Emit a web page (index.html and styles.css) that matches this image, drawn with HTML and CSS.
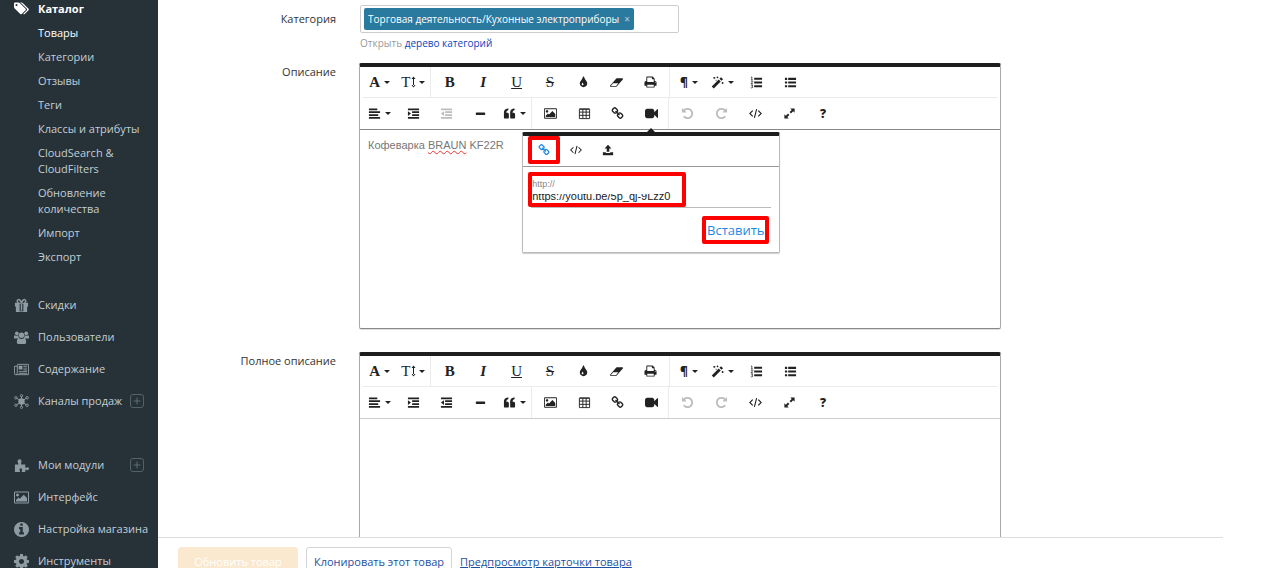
FILE: index.html
```html
<!DOCTYPE html>
<html lang="ru">
<head>
<meta charset="utf-8">
<title>Товары</title>
<link rel="stylesheet" href="styles.css">
</head>
<body>
<svg class="sprite" aria-hidden="true">
  <symbol id="tags" viewBox="0 0 1920 1792"><path d="M448 448q0-53-37.500-90.500t-90.500-37.500-90.500 37.500-37.500 90.500 37.500 90.500 90.500 37.500 90.500-37.500 37.500-90.500zm1067 576q0 53-37 90l-491 492q-39 37-91 37-53 0-90-37l-715-716q-38-37-64.500-101t-26.500-117v-416q0-52 38-90t90-38h416q53 0 117 26.500t102 64.500l715 714q37 39 37 91zm384 0q0 53-37 90l-491 492q-39 37-91 37-36 0-59-14t-53-45l470-470q37-37 37-90 0-52-37-91l-715-714q-38-38-102-64.500t-117-26.500h224q53 0 117 26.500t102 64.500l715 714q37 39 37 91z"/></symbol>
  <symbol id="gift" viewBox="0 0 16 16"><path fill-rule="evenodd" d="M1 5h14v4h-1v6H2V9H1zM6 6v8h4V6z"/><path d="M7.200 6.500h1.600v7H7.200z"/><path fill="none" stroke="currentColor" stroke-width="1.500" d="M8 5C7 2.500 5.500 1.500 4.500 1.700 2.800 2 3 4.600 5 4.900M8 5c1-2.500 2.500-3.500 3.500-3.300C13.200 2 13 4.600 11 4.900"/></symbol>
  <symbol id="users" viewBox="0 0 16 16"><circle cx="3" cy="3.500" r="2"/><circle cx="13" cy="3.500" r="2"/><circle cx="8" cy="5.500" r="2.900"/><path d="M0 9V7q0-1.500 1-1.500 1.800 1 3.600.2Q4.600 7.500 5.500 9H0zM16 9V7q0-1.500-1-1.500-1.800 1-3.600.2 0 1.800-.9 3.300H16zM3 13q0-4 2.500-4.200Q8 10.500 10.500 8.800 13 9 13 13q0 2-2 2H5q-2 0-2-2z"/></symbol>
  <symbol id="news" viewBox="0 0 16 16"><path fill="none" stroke="currentColor" d="M3.500 2.500h12v11h-14q-1 0-1-1v-8h3M3.500 3v9q0 1.500-1.500 1.500"/><path d="M5 4h4v4H5zM10 4h4v1h-4zM10 6h4v1h-4zM10 8h4v1h-4zM5 9.500h9v1H5zM5 11.500h9v1H5z"/></symbol>
  <symbol id="hub" viewBox="0 0 16 16"><circle cx="8" cy="8" r="3.400"/><g fill="none" stroke="currentColor"><path d="M8 8V2.500M8 8v5.500M8 8 3 4.500M8 8l5-3.500M8 8l-5 3.500M8 8l5 3.500"/><circle cx="8" cy="1.800" r="1.200"/><circle cx="8" cy="14.200" r="1.200"/><circle cx="2" cy="4" r="1.300"/><circle cx="14" cy="4" r="1.300"/><circle cx="2" cy="12" r="1.300"/><circle cx="14" cy="12" r="1.300"/></g></symbol>
  <symbol id="puzzle" viewBox="0 0 16 16"><path d="M1 7h3.500Q5 7 4.500 5.800 3.500 4 4 2.500 5 1 6.500 1.300 8.500 2 8 4 7.300 6 7.500 6.800L12 7v3q.5.700 1.500 0 2-.8 2.500 1 0 2-1.500 2-1-.2-2-.8-.5.300-.5 2.800H8.500q-.6-.5-.1-1.500.9-2-.9-2.500Q5.500 11 6 13q.8 1.200.3 2H1z"/></symbol>
  <symbol id="image" viewBox="-64 0 1920 1792"><path d="M576 576q0 80-56 136t-136 56-136-56-56-136 56-136 136-56 136 56 56 136zm1024 384v448h-1408v-192l320-320 160 160 512-512zm96-704h-1600q-13 0-22.500 9.500t-9.500 22.500v1216q0 13 9.500 22.500t22.500 9.500h1600q13 0 22.500-9.500t9.500-22.500v-1216q0-13-9.500-22.500t-22.500-9.500zm160 32v1216q0 66-47 113t-113 47h-1600q-66 0-113-47t-47-113v-1216q0-66 47-113t113-47h1600q66 0 113 47t47 113z"/></symbol>
  <symbol id="info" viewBox="128 128 1536 1536"><path d="M1152 1376v-160q0-14-9-23t-23-9h-96v-512q0-14-9-23t-23-9h-320q-14 0-23 9t-9 23v160q0 14 9 23t23 9h96v320h-96q-14 0-23 9t-9 23v160q0 14 9 23t23 9h448q14 0 23-9t9-23zm-128-896v-160q0-14-9-23t-23-9h-192q-14 0-23 9t-9 23v160q0 14 9 23t23 9h192q14 0 23-9t9-23zm640 416q0 209-103 385.500t-279.500 279.500-385.500 103-385.500-103-279.500-279.500-103-385.500 103-385.500 279.500-279.500 385.500-103 385.500 103 279.500 279.500 103 385.500z"/></symbol>
  <symbol id="cog" viewBox="128 128 1536 1536"><path d="M1152 896q0-106-75-181t-181-75-181 75-75 181 75 181 181 75 181-75 75-181zm512-109v222q0 12-8 23t-20 13l-185 28q-19 54-39 91 35 50 107 138 10 12 10 25t-9 23q-27 37-99 108t-94 71q-12 0-26-9l-138-108q-44 23-91 38-16 136-29 186-7 28-36 28h-222q-14 0-24.500-8.500t-11.500-21.500l-28-184q-49-16-90-37l-141 107q-10 9-25 9-14 0-25-11-126-114-165-168-7-10-7-23 0-12 8-23 15-21 51-66.500t54-70.500q-27-50-41-99l-183-27q-13-2-21-12.500t-8-23.500v-222q0-12 8-23t19-13l186-28q14-46 39-92-40-57-107-138-10-12-10-24 0-10 9-23 26-36 98.500-107.500t94.500-71.500q13 0 26 10l138 107q44-23 91-38 16-136 29-186 7-28 36-28h222q14 0 24.500 8.500t11.500 21.500l28 184q49 16 90 37l142-107q9-9 24-9 13 0 25 10 129 119 165 170 7 8 7 22 0 12-8 23-15 21-51 66.500t-54 70.500q26 50 41 98l183 28q13 2 21 12.500t8 23.500z"/></symbol>
  <symbol id="height" viewBox="0 0 5 14"><path d="M2 3h1v8H2zM2.500 1.500l2 2.500h-4zM2.500 12.500l2-2.500h-4z"/></symbol>
  <symbol id="tint" viewBox="0 0 1792 1792"><path d="M896 1152q0-36-20-69-1-1-15.500-22.500t-25.500-38-25-44-21-50.500q-4-16-21-16t-21 16q-7 23-21 50.500t-25 44-25.500 38-15.500 22.500q-20 33-20 69 0 53 37.500 90.500t90.500 37.500 90.500-37.500 37.500-90.500zm512-128q0 212-150 362t-362 150-362-150-150-362q0-145 81-275 6-9 62.500-90.500t101-151 99.500-178 83-201.500q9-30 34-47t51-17 51.500 17 33.500 47q28 93 83 201.500t99.500 178 101 151 62.500 90.500q81 127 81 275z"/></symbol>
  <symbol id="eraser" viewBox="-64 0 1920 1792"><path d="M832 1408l336-384h-768l-336 384h768zm1013-1077q15 34 9.500 71.500t-30.500 65.500l-896 1024q-38 44-96 44h-768q-38 0-69.500-20.500t-47.500-54.500q-15-34-9.500-71.500t30.500-65.500l896-1024q38-44 96-44h768q38 0 69.500 20.500t47.500 54.500z"/></symbol>
  <symbol id="print" viewBox="0 64 1792 1792"><path d="M448 1536h896v-256h-896v256zm0-640h896v-384h-160q-40 0-68-28t-28-68v-160h-640v640zm1152 64q0-26-19-45t-45-19-45 19-19 45 19 45 45 19 45-19 19-45zm128 0v416q0 13-9.500 22.500t-22.500 9.500h-224v160q0 40-28 68t-68 28h-960q-40 0-68-28t-28-68v-160h-224q-13 0-22.500-9.500t-9.500-22.500v-416q0-79 56.500-135.500t135.500-56.500h64v-544q0-40 28-68t68-28h672q40 0 88 20t76 48l152 152q28 28 48 76t20 88v256h64q79 0 135.500 56.500t56.500 135.500z"/></symbol>
  <symbol id="magic" viewBox="0 0 14 14"><path d="M.8 11.300 8.300 3.800l2.200 2.200L3 13.500zM9.100 3l1.700-1.700L13 3.500l-1.700 1.700z"/><path d="M3 1h1.200v2H3zM2.300 1.500h2.500v1H2.300zM6.500.5h1v2h-1zM6 1h2v1H6zM12 6.500h1v2h-1zM11.500 7h2v1h-2zM5 4h1v1H5z"/></symbol>
  <symbol id="ol" viewBox="0 0 14 14"><path d="M4.500 2H13v2H4.500zM4.500 6H13v2H4.500zM4.500 10H13v2H4.500z"/><path fill="none" stroke="currentColor" stroke-width=".8" d="M1 1.500 2 1v3M1 4.200h2M1 5.800q2-1 2 .3L1 8.300h2.200M1 9.800h2l-1 1.200q1.500.3.800 1.400-1 .8-2 0"/></symbol>
  <symbol id="ul" viewBox="0 0 14 14"><path d="M1 2h2.400v2.200H1zM4.500 2H13v2.200H4.500zM1 6h2.400v2.200H1zM4.500 6H13v2.200H4.500zM1 10h2.400v2.200H1zM4.500 10H13v2.200H4.500z"/></symbol>
  <symbol id="align" viewBox="0 0 14 14"><path d="M1 1.500h9v1.900H1zM1 4.600h12v1.900H1zM1 7.700h10v1.900H1zM1 10.800h12v1.900H1z"/></symbol>
  <symbol id="indent" viewBox="0 0 14 14"><path d="M1 1.500h12v1.900H1zM5.500 4.600H13v1.900H5.500zM5.500 7.700H13v1.900H5.500zM1 10.800h12v1.900H1zM1 4.600l3.300 2.500L1 9.600z"/></symbol>
  <symbol id="outdent" viewBox="0 0 14 14"><path d="M1 1.500h12v1.900H1zM5.500 4.600H13v1.900H5.500zM5.500 7.700H13v1.900H5.500zM1 10.800h12v1.900H1zM4.300 4.600 1 7.100l3.300 2.500z"/></symbol>
  <symbol id="minus" viewBox="0 0 14 14"><rect x="2" y="6" width="10" height="2.500" rx=".6"/></symbol>
  <symbol id="quote" viewBox="0 0 14 14"><path d="M6.300 8v3.200q0 1.300-1.300 1.300H2.300Q1 12.500 1 11.200V6q0-4 4-4.500h.8v1.800Q3.500 3.700 3.500 6.300H5Q6.300 6.500 6.300 8zM13 8v3.200q0 1.300-1.300 1.300H9q-1.300 0-1.300-1.300V6q0-4 4-4.500h.8v1.800q-2.300.4-2.300 3h1.500Q13 6.500 13 8z"/></symbol>
  <symbol id="table" viewBox="0 0 14 14"><path fill="none" stroke="currentColor" d="M1.500 2.500h11v10h-11zM1.500 5.500h11M1.500 9h11M5.200 2.500v10M8.800 2.500v10M1.500 2h11"/></symbol>
  <symbol id="link" viewBox="0 0 1792 1792"><path d="M1520 1216q0-40-28-68l-208-208q-28-28-68-28-42 0-72 32 3 3 19 18.500t21.500 21.500 15 19 13 25.500 3.500 27.500q0 40-28 68t-68 28q-15 0-27.500-3.500t-25.500-13-19-15-21.500-21.500-18.500-19q-33 31-33 73 0 40 28 68l206 207q27 27 68 27 40 0 68-26l147-146q28-28 28-67zm-703-705q0-40-28-68l-206-207q-28-28-68-28-39 0-68 27l-147 146q-28 28-28 67 0 40 28 68l208 208q27 27 68 27 42 0 72-31-3-3-19-18.500t-21.500-21.500-15-19-13-25.500-3.500-27.500q0-40 28-68t68-28q15 0 27.500 3.500t25.500 13 19 15 21.500 21.500 18.500 19q33-31 33-73zm895 705q0 120-85 203l-147 146q-83 83-203 83-121 0-204-85l-206-207q-83-83-83-203 0-123 88-209l-88-88q-86 88-208 88-120 0-204-84l-208-208q-84-84-84-204t85-203l147-146q83-83 203-83 121 0 204 85l206 207q83 83 83 203 0 123-88 209l88 88q86-88 208-88 120 0 204 84l208 208q84 84 84 204z"/></symbol>
  <symbol id="video" viewBox="0 0 1792 1792"><path d="M1792 352v1088q0 42-39 59-13 5-25 5-27 0-45-19l-403-403v166q0 119-84.500 203.500t-203.500 84.500h-704q-119 0-203.500-84.500t-84.500-203.500v-704q0-119 84.500-203.500t203.500-84.500h704q119 0 203.500 84.500t84.500 203.500v165l403-402q18-19 45-19 12 0 25 5 39 17 39 59z"/></symbol>
  <symbol id="undo" viewBox="0 0 1792 1792"><path d="M1664 896q0 156-61 298t-164 245-245 164-298 61q-172 0-327-72.500t-264-204.500q-7-10-6.500-22.500t8.500-20.500l137-138q10-9 25-9 16 2 23 12 73 95 179 147t225 52q104 0 198.500-40.500t163.500-109.500 109.500-163.500 40.500-198.500-40.500-198.500-109.500-163.500-163.500-109.500-198.500-40.500q-98 0-188 35.500t-160 101.500l137 138q31 30 14 69-17 40-59 40h-448q-26 0-45-19t-19-45v-448q0-42 40-59 39-17 69 14l130 129q107-101 244.500-156.500t284.500-55.500q156 0 298 61t245 164 164 245 61 298z"/></symbol>
  <symbol id="redo" viewBox="0 0 14 14"><use href="#undo" width="14" height="14" transform="matrix(-1 0 0 1 14 0)"/></symbol>
  <symbol id="code" viewBox="0 0 14 14"><path fill="none" stroke="currentColor" stroke-width="1.200" d="M4 3.800.9 7 4 10.200M10 3.800 13.100 7 10 10.200M8.200 2.300 5.800 11.700"/></symbol>
  <symbol id="expand" viewBox="0 0 14 14"><path d="M12.500 1.500v4.700L10.900 4.600 8.600 6.900 7.100 5.400l2.300-2.300-1.600-1.600zM1.500 12.500V7.800l1.600 1.600 2.300-2.300 1.500 1.500-2.300 2.300 1.600 1.600z"/></symbol>
  <symbol id="upload" viewBox="0 0 14 14"><path d="M7 1l4 4.200H8.500V9h-3V5.200H3zM1 9.500h3.500v1h5v-1H13V13H1z"/></symbol>
  <symbol id="plus" viewBox="0 0 14 14"><path fill="none" stroke="currentColor" d="M7 3v8M3 7h8"/></symbol>
</svg>

<div class="app">
  <nav class="sidebar" aria-label="Меню">
    <a class="item active" href="#"><svg><use href="#tags"/></svg>Каталог</a>
    <div class="submenu">
      <a class="current" href="#">Товары</a>
      <a href="#">Категории</a>
      <a href="#">Отзывы</a>
      <a href="#">Теги</a>
      <a href="#">Классы и атрибуты</a>
      <a href="#">CloudSearch &amp; CloudFilters</a>
      <a href="#">Обновление количества</a>
      <a href="#">Импорт</a>
      <a href="#">Экспорт</a>
    </div>
    <div class="section">
      <a class="item" href="#"><svg><use href="#gift"/></svg>Скидки</a>
      <a class="item" href="#"><svg><use href="#users"/></svg>Пользователи</a>
      <a class="item" href="#"><svg><use href="#news"/></svg>Содержание</a>
      <div class="row"><a class="item" href="#"><svg><use href="#hub"/></svg>Каналы продаж</a><button class="add" type="button" aria-label="Добавить канал"><svg><use href="#plus"/></svg></button></div>
    </div>
    <div class="section">
      <div class="row"><a class="item" href="#"><svg><use href="#puzzle"/></svg>Мои модули</a><button class="add" type="button" aria-label="Добавить модуль"><svg><use href="#plus"/></svg></button></div>
      <a class="item" href="#"><svg><use href="#image"/></svg>Интерфейс</a>
      <a class="item" href="#"><svg><use href="#info"/></svg>Настройка магазина</a>
      <a class="item" href="#"><svg><use href="#cog"/></svg>Инструменты</a>
    </div>
  </nav>

  <main class="main">
    <form class="form" id="product">
      <div class="field">
        <label class="label" for="category">Категория</label>
        <div>
          <div class="tags">
            <span class="tag">Торговая деятельность/Кухонные электроприборы <button type="button" aria-label="Удалить">×</button></span>
            <input id="category" type="text">
          </div>
          <p class="hint">Открыть <a href="#">дерево категорий</a></p>
        </div>
      </div>

      <div class="field">
        <span class="label" id="short-label">Описание</span>
        <div class="editor">
          <div class="toolbar">
            <div class="tools">
              <div class="group g2"><button type="button" class="serif bold caret">A</button><button type="button" class="serif caret size">T<svg><use href="#height"/></svg></button></div>
              <div class="group g7"><button type="button" class="serif bold">B</button><button type="button" class="serif italic">I</button><button type="button" class="serif under">U</button><button type="button" class="serif strike">S</button><button type="button" aria-label="Цвет"><svg><use href="#tint"/></svg></button><button type="button" aria-label="Очистить"><svg><use href="#eraser"/></svg></button><button type="button" aria-label="Печать"><svg><use href="#print"/></svg></button></div>
              <div class="group g4"><button type="button" class="sign caret">¶</button><button type="button" class="caret" aria-label="Стиль"><svg><use href="#magic"/></svg></button><button type="button" aria-label="Нумерация"><svg><use href="#ol"/></svg></button><button type="button" aria-label="Список"><svg><use href="#ul"/></svg></button></div>
            </div>
            <div class="tools">
              <div class="group g5"><button type="button" class="caret" aria-label="Выравнивание"><svg><use href="#align"/></svg></button><button type="button" aria-label="Увеличить отступ"><svg><use href="#indent"/></svg></button><button type="button" disabled aria-label="Уменьшить отступ"><svg><use href="#outdent"/></svg></button><button type="button" aria-label="Линия"><svg><use href="#minus"/></svg></button><button type="button" class="caret" aria-label="Цитата"><svg><use href="#quote"/></svg></button></div>
              <div class="group g4"><button type="button" aria-label="Изображение"><svg><use href="#image"/></svg></button><button type="button" aria-label="Таблица"><svg><use href="#table"/></svg></button><button type="button" aria-label="Ссылка"><svg><use href="#link"/></svg></button>
                <div class="anchor"><button type="button" aria-label="Видео"><svg><use href="#video"/></svg></button>
                  <div class="popup">
                    <div class="popup-tabs">
                      <button type="button" class="on mark" aria-label="По ссылке"><svg><use href="#link"/></svg></button>
                      <button type="button" aria-label="Код"><svg><use href="#code"/></svg></button>
                      <button type="button" aria-label="Загрузить"><svg><use href="#upload"/></svg></button>
                    </div>
                    <div class="popup-body">
                      <div class="url">
                        <label for="video-url">http://</label>
                        <input id="video-url" class="mark" type="text" value="https://youtu.be/5p_qj-9Lzz0">
                      </div>
                      <button type="button" class="insert mark">Вставить</button>
                    </div>
                  </div>
                </div>
              </div>
              <div class="group g5"><button type="button" disabled aria-label="Отменить"><svg><use href="#undo"/></svg></button><button type="button" disabled aria-label="Повторить"><svg><use href="#redo"/></svg></button><button type="button" aria-label="Код"><svg><use href="#code"/></svg></button><button type="button" aria-label="Развернуть"><svg><use href="#expand"/></svg></button><button type="button" class="sign">?</button></div>
            </div>
          </div>
          <div class="text" contenteditable="true" spellcheck="false" role="textbox" aria-labelledby="short-label">Кофеварка <span class="typo">BRAUN</span> KF22R</div>
        </div>
      </div>

      <div class="field">
        <span class="label" id="full-label">Полное описание</span>
        <div class="editor light">
          <div class="toolbar">
            <div class="tools">
              <div class="group g2"><button type="button" class="serif bold caret">A</button><button type="button" class="serif caret size">T<svg><use href="#height"/></svg></button></div>
              <div class="group g7"><button type="button" class="serif bold">B</button><button type="button" class="serif italic">I</button><button type="button" class="serif under">U</button><button type="button" class="serif strike">S</button><button type="button" aria-label="Цвет"><svg><use href="#tint"/></svg></button><button type="button" aria-label="Очистить"><svg><use href="#eraser"/></svg></button><button type="button" aria-label="Печать"><svg><use href="#print"/></svg></button></div>
              <div class="group g4"><button type="button" class="sign caret">¶</button><button type="button" class="caret" aria-label="Стиль"><svg><use href="#magic"/></svg></button><button type="button" aria-label="Нумерация"><svg><use href="#ol"/></svg></button><button type="button" aria-label="Список"><svg><use href="#ul"/></svg></button></div>
            </div>
            <div class="tools">
              <div class="group g5"><button type="button" class="caret" aria-label="Выравнивание"><svg><use href="#align"/></svg></button><button type="button" aria-label="Увеличить отступ"><svg><use href="#indent"/></svg></button><button type="button" aria-label="Уменьшить отступ"><svg><use href="#outdent"/></svg></button><button type="button" aria-label="Линия"><svg><use href="#minus"/></svg></button><button type="button" class="caret" aria-label="Цитата"><svg><use href="#quote"/></svg></button></div>
              <div class="group g4"><button type="button" aria-label="Изображение"><svg><use href="#image"/></svg></button><button type="button" aria-label="Таблица"><svg><use href="#table"/></svg></button><button type="button" aria-label="Ссылка"><svg><use href="#link"/></svg></button><button type="button" aria-label="Видео"><svg><use href="#video"/></svg></button></div>
              <div class="group g5"><button type="button" disabled aria-label="Отменить"><svg><use href="#undo"/></svg></button><button type="button" disabled aria-label="Повторить"><svg><use href="#redo"/></svg></button><button type="button" aria-label="Код"><svg><use href="#code"/></svg></button><button type="button" aria-label="Развернуть"><svg><use href="#expand"/></svg></button><button type="button" class="sign">?</button></div>
            </div>
          </div>
          <div class="text" contenteditable="true" spellcheck="false" role="textbox" aria-labelledby="full-label"></div>
        </div>
      </div>
    </form>

    <footer class="actions">
      <button class="btn primary" type="submit" form="product" disabled>Обновить товар</button>
      <button class="btn" type="button">Клонировать этот товар</button>
      <a href="#">Предпросмотр карточки товара</a>
    </footer>
  </main>
</div>
</body>
</html>
```
FILE: styles.css
```css
* { box-sizing: border-box; }
body { margin: 0; font: 11px/16px "Open Sans", sans-serif; color: #333; background: #fff; }
button, input { font: inherit; color: inherit; margin: 0; padding: 0; border: 0; background: none; }
svg { display: block; fill: currentColor; }
.sprite { position: absolute; width: 0; height: 0; }
.app { display: flex; height: 100vh; overflow: hidden; }

.sidebar { flex: none; width: 158px; overflow: hidden; background: #263238; }
.sidebar a { color: #c3ced6; text-decoration: none; }
.item { display: flex; align-items: center; gap: 9px; height: 32px; padding-left: 14px; white-space: nowrap; }
.item svg { width: 15px; height: 15px; color: #8f9ba3; }
.sidebar .active { height: 17px; color: #fff; font-weight: 700; }
.active svg { color: #fff; }
.submenu { display: flex; flex-direction: column; gap: 8px; padding: 8px 14px 24px 38px; }
.sidebar .current { color: #fff; }
.section { padding-bottom: 32px; }
.row { display: flex; align-items: center; justify-content: space-between; padding-right: 14px; }
.add { width: 14px; height: 14px; border: 1px solid #53616a; border-radius: 3px; color: #65737b; }
.add svg { width: 12px; height: 12px; }

.main { flex: 1; min-width: 0; display: flex; flex-direction: column; }
.form { flex: 1; min-height: 0; overflow: hidden; padding-top: 5px; }
.field { display: grid; grid-template-columns: 178px minmax(0, 642px); column-gap: 23px; }
.label { text-align: right; padding-top: 6px; }
.tags { display: flex; width: calc(50% - 2px); height: 28px; margin-left: 1px; padding: 2px 3px; border: 1px solid #ccc; border-radius: 2px; }
.tags input { flex: 1; min-width: 0; outline: 0; }
.tag { flex: none; display: flex; align-items: center; gap: 5px; height: 22px; padding: 0 4px; border-radius: 2px; background: #2a7a9f; color: #fff; font-size: 10px; white-space: nowrap; }
.tag button { color: #b5d3df; }
.hint { margin: 2px 0 12px 1px; font-size: 10px; color: #999; }
.hint a { color: #0645c0; text-decoration: none; }

.editor { height: 266px; margin-bottom: 23px; border: 1px solid #aaa; border-top: 4px solid #1e1e1e; border-bottom-color: #888; border-radius: 2px; box-shadow: 0 1px 1px #ddd; }
.field:has(.editor) .label { padding-top: 1px; }
.toolbar { border-bottom: 1px solid #888; }
.light .toolbar { border-bottom-color: #ccc; }
.light { height: 300px; }
.tools { display: flex; height: 31px; padding-left: 3px; }
.tools:first-child { border-bottom: 1px solid #ebebeb; margin: 0 3px; padding: 0; }
.group { display: flex; margin-right: 2px; }
.group:not(:last-child) { border-right: 1px solid #ebebeb; }
.g2 { width: 68px; }
.g4 { width: 135px; }
.g5 { width: 169px; }
.g7 { width: 237px; padding-right: 2px; }
.group > *, .anchor button { flex: 1 1 0; display: flex; align-items: center; justify-content: center; gap: 4px; color: #222; }
.group svg { flex: none; width: 13px; height: 13px; }
.group button:disabled { color: #bdbdbd; }
.caret::after { content: ""; border: 3px solid transparent; border-top-color: currentColor; border-bottom: 0; }
.serif { font-family: "Liberation Serif", serif; font-size: 15px; }
.bold { font-weight: 700; }
.italic { font-style: italic; font-weight: 700; }
.under { text-decoration: underline; }
.strike { text-decoration: line-through; }
.group > .size { gap: 1px; }
.group .size svg { width: 5px; height: 14px; margin-right: 2px; }
.sign { font-family: "Open Sans", sans-serif; font-weight: 800; font-size: 12px; }
.text { padding: 7px 8px; font: 11px/16px "Liberation Sans", sans-serif; color: #777; outline: 0; }
.typo { text-decoration: underline wavy #e33 1px; }

.anchor { position: relative; }
.anchor > button { align-self: stretch; }
.popup { position: absolute; z-index: 2; top: 34px; left: 50%; width: 258px; margin-left: -129px; border: 1px solid #bbb; border-top: 4px solid #1e1e1e; border-radius: 2px; background: #fff; box-shadow: 0 1px 1px #ccc; }
.popup::before { content: ""; position: absolute; left: 50%; top: -8px; margin-left: -4px; border: 4px solid transparent; border-top: 0; border-bottom-color: #1e1e1e; }
.popup-tabs { display: flex; height: 31px; padding-left: 5px; border-bottom: 1px solid #999; }
.popup-tabs button { flex: none; width: 32px; height: 28px; }
.popup-tabs .on { color: #1e88e5; }
.popup-tabs svg { width: 12px; height: 12px; }
.mark { outline: 4px solid #f00; outline-offset: -4px; border-radius: 2px; }
.popup-body { display: flex; flex-direction: column; padding: 5px 8px 8px; }
.url { position: relative; margin-left: -3px; }
.url::after { content: ""; display: block; margin-left: 3px; border-top: 1px solid #bbb; }
.url label { position: absolute; left: 4px; top: 4px; width: 120px; height: 18px; padding-top: 2px; font: 9px/12px "Liberation Sans", sans-serif; color: #888; background: #fff; }
.url input { display: block; width: 158px; height: 35px; padding: 12px 4px 0; font: 11px/13px "Liberation Sans", sans-serif; }
.popup-body .insert { flex: none; align-self: flex-end; width: 67px; height: 28px; margin: 8px 2px 0 0; font-size: 13px; color: #1e88e5; }

.actions { flex: none; display: flex; align-items: flex-start; gap: 8px; height: 31px; margin-right: 40px; padding: 9px 20px 0; border-top: 1px solid #ddd; overflow: hidden; }
.btn { flex: none; height: 30px; padding: 0 7px; border: 1px solid #d5d5d5; border-radius: 3px; color: #1d4fa0; }
.primary { width: 120px; border-color: #fae8cf; background: #fae8cf; color: #fff; }
.actions a { line-height: 30px; color: #1d4fa0; }
```
